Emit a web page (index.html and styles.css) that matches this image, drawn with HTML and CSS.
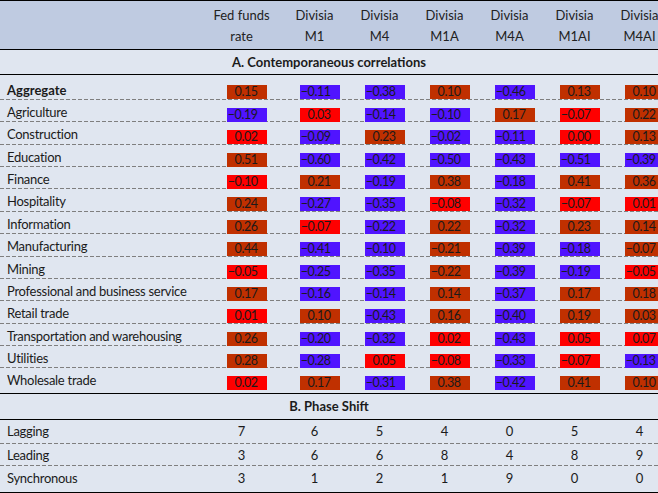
FILE: index.html
```html
<!DOCTYPE html>
<html>
<head>
<meta charset="utf-8">
<link rel="stylesheet" href="styles.css">
</head>
<body>
<div class="tbl">
  <div class="row head">
    <div></div>
    <div>Fed funds<br>rate</div>
    <div>Divisia<br>M1</div>
    <div>Divisia<br>M4</div>
    <div>Divisia<br>M1A</div>
    <div>Divisia<br>M4A</div>
    <div>Divisia<br>M1AI</div>
    <div>Divisia<br>M4AI</div>
  </div>
  <div class="sec secA">A. Contemporaneous correlations</div>

  <div class="row data first">
    <div class="lab strong">Aggregate</div>
    <div class="num"><span class="b br">0.15</span></div>
    <div class="num"><span class="b bl">−0.11</span></div>
    <div class="num"><span class="b bl">−0.38</span></div>
    <div class="num"><span class="b br">0.10</span></div>
    <div class="num"><span class="b bl">−0.46</span></div>
    <div class="num"><span class="b br">0.13</span></div>
    <div class="num"><span class="b br">0.10</span></div>
  </div>
  <div class="row data">
    <div class="lab">Agriculture</div>
    <div class="num"><span class="b bl">−0.19</span></div>
    <div class="num"><span class="b rd">0.03</span></div>
    <div class="num"><span class="b bl">−0.14</span></div>
    <div class="num"><span class="b bl">−0.10</span></div>
    <div class="num"><span class="b br">0.17</span></div>
    <div class="num"><span class="b rd">−0.07</span></div>
    <div class="num"><span class="b br">0.22</span></div>
  </div>
  <div class="row data">
    <div class="lab">Construction</div>
    <div class="num"><span class="b rd">0.02</span></div>
    <div class="num"><span class="b bl">−0.09</span></div>
    <div class="num"><span class="b br">0.23</span></div>
    <div class="num"><span class="b bl">−0.02</span></div>
    <div class="num"><span class="b bl">−0.11</span></div>
    <div class="num"><span class="b rd">0.00</span></div>
    <div class="num"><span class="b br">0.13</span></div>
  </div>
  <div class="row data">
    <div class="lab">Education</div>
    <div class="num"><span class="b br">0.51</span></div>
    <div class="num"><span class="b bl">−0.60</span></div>
    <div class="num"><span class="b bl">−0.42</span></div>
    <div class="num"><span class="b bl">−0.50</span></div>
    <div class="num"><span class="b bl">−0.43</span></div>
    <div class="num"><span class="b bl">−0.51</span></div>
    <div class="num"><span class="b bl">−0.39</span></div>
  </div>
  <div class="row data">
    <div class="lab">Finance</div>
    <div class="num"><span class="b rd">−0.10</span></div>
    <div class="num"><span class="b br">0.21</span></div>
    <div class="num"><span class="b bl">−0.19</span></div>
    <div class="num"><span class="b br">0.38</span></div>
    <div class="num"><span class="b bl">−0.18</span></div>
    <div class="num"><span class="b br">0.41</span></div>
    <div class="num"><span class="b br">0.36</span></div>
  </div>
  <div class="row data">
    <div class="lab">Hospitality</div>
    <div class="num"><span class="b br">0.24</span></div>
    <div class="num"><span class="b bl">−0.27</span></div>
    <div class="num"><span class="b bl">−0.35</span></div>
    <div class="num"><span class="b rd">−0.08</span></div>
    <div class="num"><span class="b bl">−0.32</span></div>
    <div class="num"><span class="b rd">−0.07</span></div>
    <div class="num"><span class="b rd">0.01</span></div>
  </div>
  <div class="row data">
    <div class="lab">Information</div>
    <div class="num"><span class="b br">0.26</span></div>
    <div class="num"><span class="b rd">−0.07</span></div>
    <div class="num"><span class="b bl">−0.22</span></div>
    <div class="num"><span class="b br">0.22</span></div>
    <div class="num"><span class="b bl">−0.32</span></div>
    <div class="num"><span class="b br">0.23</span></div>
    <div class="num"><span class="b br">0.14</span></div>
  </div>
  <div class="row data">
    <div class="lab">Manufacturing</div>
    <div class="num"><span class="b br">0.44</span></div>
    <div class="num"><span class="b bl">−0.41</span></div>
    <div class="num"><span class="b bl">−0.10</span></div>
    <div class="num"><span class="b br">−0.21</span></div>
    <div class="num"><span class="b bl">−0.39</span></div>
    <div class="num"><span class="b bl">−0.18</span></div>
    <div class="num"><span class="b br">−0.07</span></div>
  </div>
  <div class="row data">
    <div class="lab">Mining</div>
    <div class="num"><span class="b rd">−0.05</span></div>
    <div class="num"><span class="b bl">−0.25</span></div>
    <div class="num"><span class="b bl">−0.35</span></div>
    <div class="num"><span class="b br">−0.22</span></div>
    <div class="num"><span class="b bl">−0.39</span></div>
    <div class="num"><span class="b bl">−0.19</span></div>
    <div class="num"><span class="b rd">−0.05</span></div>
  </div>
  <div class="row data">
    <div class="lab">Professional and business service</div>
    <div class="num"><span class="b br">0.17</span></div>
    <div class="num"><span class="b bl">−0.16</span></div>
    <div class="num"><span class="b bl">−0.14</span></div>
    <div class="num"><span class="b br">0.14</span></div>
    <div class="num"><span class="b bl">−0.37</span></div>
    <div class="num"><span class="b br">0.17</span></div>
    <div class="num"><span class="b br">0.18</span></div>
  </div>
  <div class="row data">
    <div class="lab">Retail trade</div>
    <div class="num"><span class="b rd">0.01</span></div>
    <div class="num"><span class="b br">0.10</span></div>
    <div class="num"><span class="b bl">−0.43</span></div>
    <div class="num"><span class="b br">0.16</span></div>
    <div class="num"><span class="b bl">−0.40</span></div>
    <div class="num"><span class="b br">0.19</span></div>
    <div class="num"><span class="b br">0.03</span></div>
  </div>
  <div class="row data">
    <div class="lab">Transportation and warehousing</div>
    <div class="num"><span class="b br">0.26</span></div>
    <div class="num"><span class="b bl">−0.20</span></div>
    <div class="num"><span class="b bl">−0.32</span></div>
    <div class="num"><span class="b rd">0.02</span></div>
    <div class="num"><span class="b bl">−0.43</span></div>
    <div class="num"><span class="b rd">0.05</span></div>
    <div class="num"><span class="b rd">0.07</span></div>
  </div>
  <div class="row data">
    <div class="lab">Utilities</div>
    <div class="num"><span class="b br">0.28</span></div>
    <div class="num"><span class="b bl">−0.28</span></div>
    <div class="num"><span class="b rd">0.05</span></div>
    <div class="num"><span class="b rd">−0.08</span></div>
    <div class="num"><span class="b bl">−0.33</span></div>
    <div class="num"><span class="b rd">−0.07</span></div>
    <div class="num"><span class="b bl">−0.13</span></div>
  </div>
  <div class="row data last">
    <div class="lab">Wholesale trade</div>
    <div class="num"><span class="b rd">0.02</span></div>
    <div class="num"><span class="b br">0.17</span></div>
    <div class="num"><span class="b bl">−0.31</span></div>
    <div class="num"><span class="b br">0.38</span></div>
    <div class="num"><span class="b bl">−0.42</span></div>
    <div class="num"><span class="b br">0.41</span></div>
    <div class="num"><span class="b br">0.10</span></div>
  </div>

  <div class="sec secB">B. Phase Shift</div>

  <div class="row ph p1">
    <div class="lab">Lagging</div>
    <div class="num">7</div><div class="num">6</div><div class="num">5</div><div class="num">4</div><div class="num">0</div><div class="num">5</div><div class="num">4</div>
  </div>
  <div class="row ph p2">
    <div class="lab">Leading</div>
    <div class="num">3</div><div class="num">6</div><div class="num">6</div><div class="num">8</div><div class="num">4</div><div class="num">8</div><div class="num">9</div>
  </div>
  <div class="row ph p3">
    <div class="lab">Synchronous</div>
    <div class="num">3</div><div class="num">1</div><div class="num">2</div><div class="num">1</div><div class="num">9</div><div class="num">0</div><div class="num">0</div>
  </div>
</div>
</body>
</html>
```
FILE: styles.css
```css
* { box-sizing: border-box; }
html, body {
  margin: 0;
  padding: 0;
  overflow: hidden;
  background: #e0e6f0;
}
body {
  font-family: Lato, "Noto Sans", sans-serif;
  font-size: 13px;
  color: #1b1b1b;
}
.tbl { width: 672px; }
.row {
  display: grid;
  grid-template-columns: 201px 81px repeat(6, 65px);
}
.head {
  background: #bfcbe1;
  border-top: 1px solid #000;
  border-bottom: 1px solid #000;
  height: 50px;
  padding-top: 4px;
  line-height: 21px;
  text-align: center;
  color: #222;
}
.sec {
  width: 658px;
  text-align: center;
  font-weight: bold;
  height: 25px;
  line-height: 24px;
  border-bottom: 1px solid #000;
}
.secB {
  border-top: 1px solid #000;
  height: 27px;
  line-height: 25px;
}
.data, .ph {
  background-image: linear-gradient(to right, #7f7f7f 4px, transparent 4px);
  background-size: 6px 1px;
  background-position: left bottom;
  background-repeat: repeat-x;
}
.data { height: 22.4px; }
.data.first { height: 24.8px; }
.data.last { height: 24.4px; background-image: none; }
.lab {
  padding-left: 7px;
  padding-top: 4px;
  line-height: 16px;
  white-space: nowrap;
  letter-spacing: -0.28px;
}
.strong { font-weight: bold; letter-spacing: 0; }
.num {
  text-align: center;
  padding-top: 6px;
}
.first .lab { padding-top: 6.5px; }
.first .num { padding-top: 8px; }
.b {
  display: inline-block;
  width: 40px;
  height: 14px;
  line-height: 14px;
  margin-left: 10px;
  padding-right: 9px;
  text-align: right;
  font-size: 12.5px;
  letter-spacing: -0.45px;
  color: #1a1a1a;
}
.br { background: #c03000; }
.bl { background: #5014ff; }
.rd { background: #ff0000; }
.ph .lab, .ph .num {
  padding-top: 3.5px;
  line-height: 16px;
}
.p1 { height: 23.7px; }
.p2 { height: 22.6px; }
.p3 {
  height: 27px;
  background-image: none;
  border-bottom: 1px solid #000;
}
```
